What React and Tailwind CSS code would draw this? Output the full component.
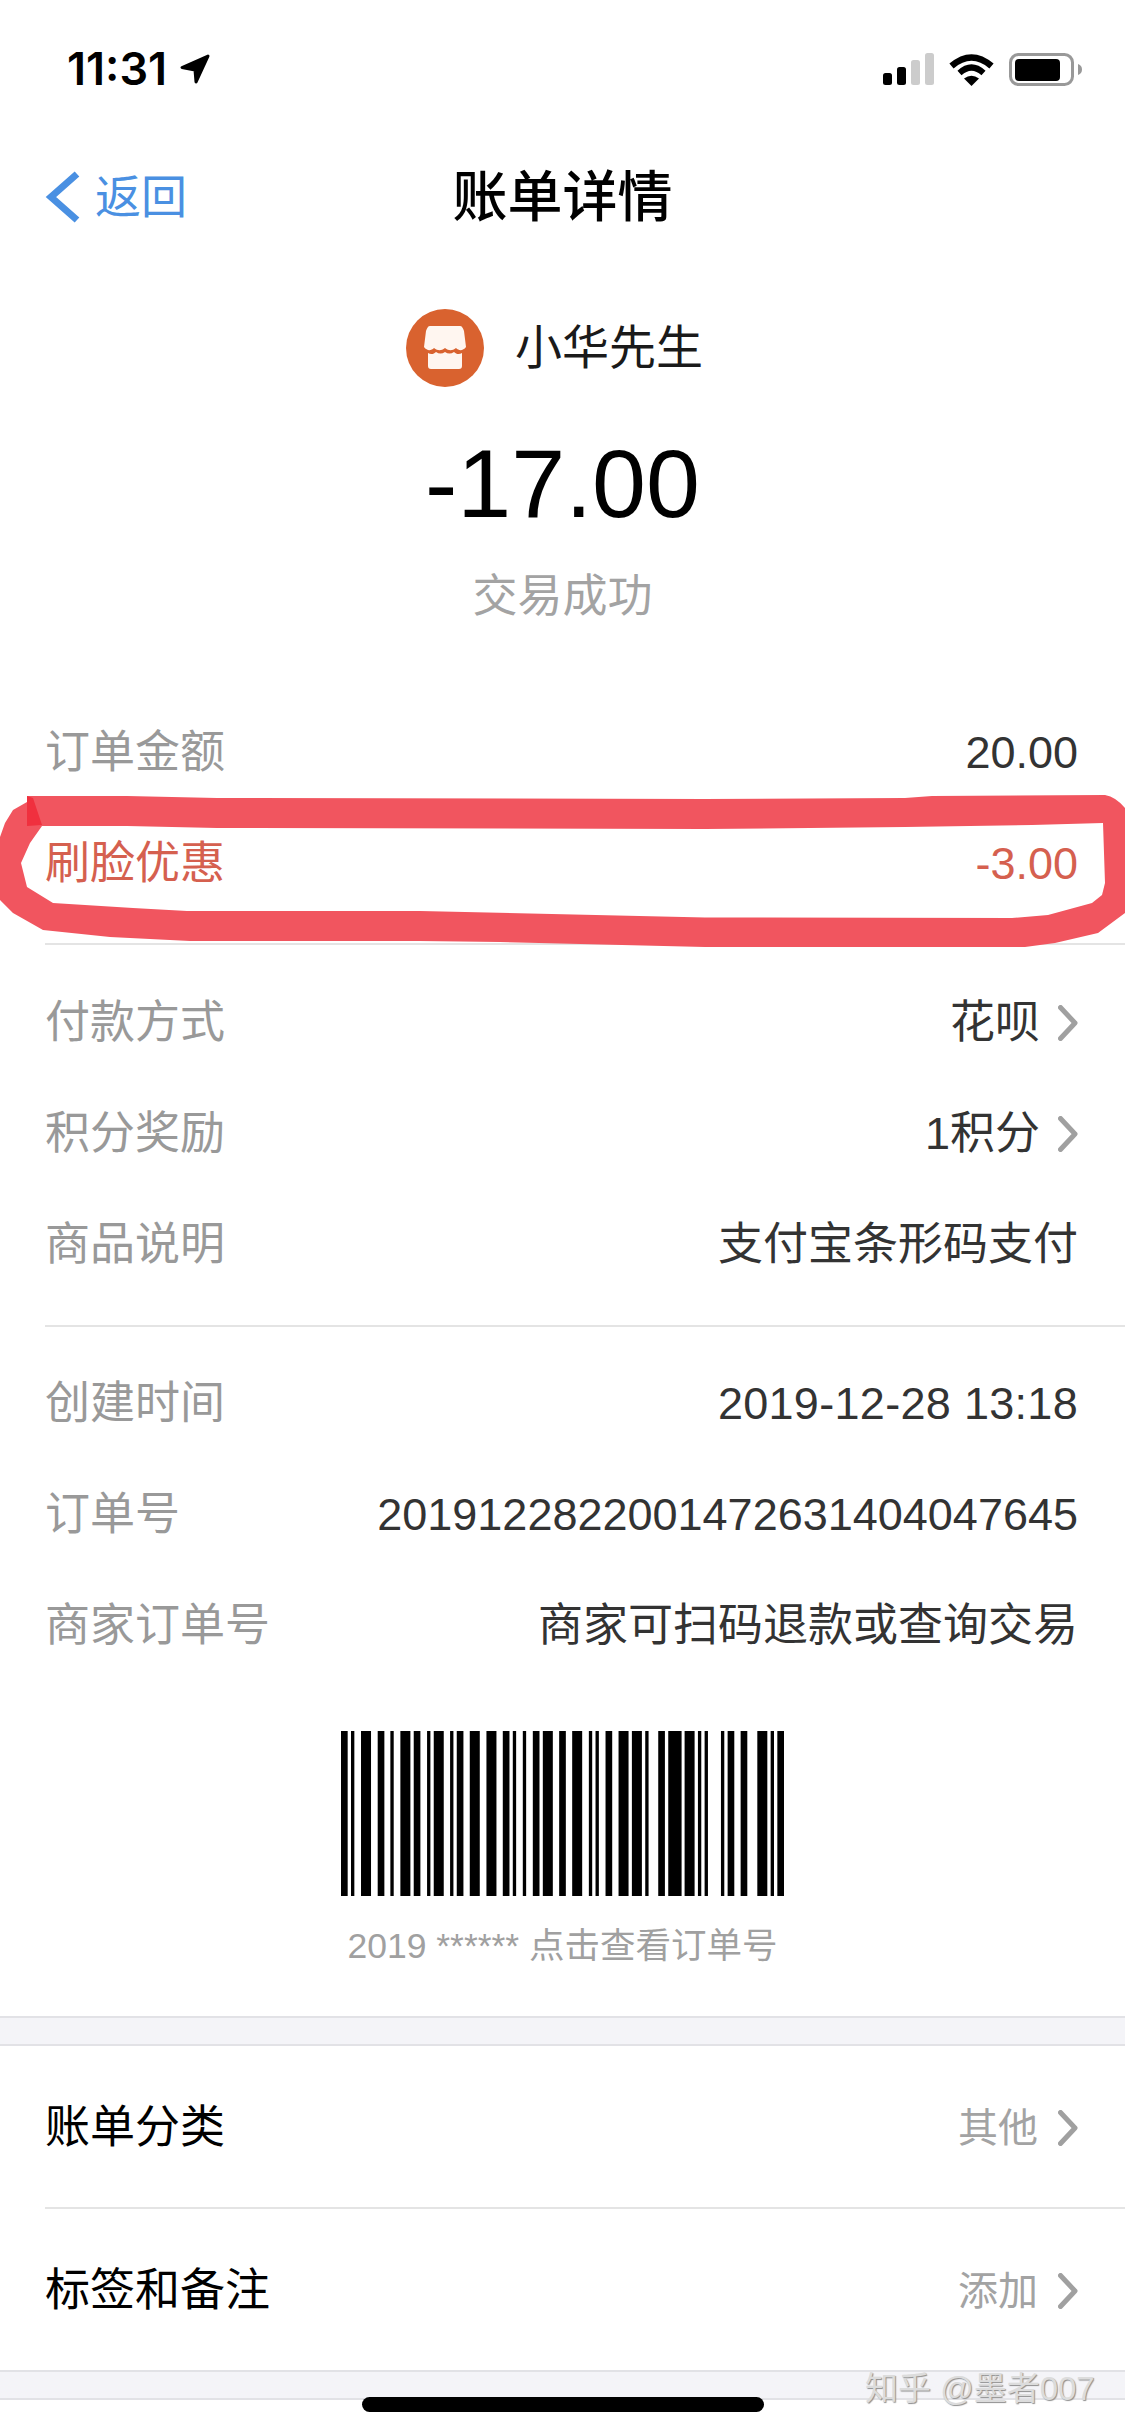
const font = { fontFamily: '"Liberation Sans", "Noto Sans CJK SC", sans-serif' };

// bar edges read off the reference, in 1/3 px
const bars = [
  [65, 85], [95, 105], [125, 155], [175, 195], [213, 223], [243, 273], [283, 303], [323, 333],
  [343, 373], [392, 402], [412, 432], [451, 481], [501, 531], [550, 570], [580, 590], [610, 620],
  [640, 660], [670, 700], [719, 739], [758, 788], [808, 818], [828, 838], [858, 878], [897, 927],
  [937, 967], [977, 987], [1016, 1036], [1046, 1086], [1095, 1125], [1135, 1145], [1155, 1165],
  [1204, 1214], [1224, 1244], [1263, 1283], [1313, 1343], [1353, 1363], [1373, 1393],
];

function Chevron() {
  return (
    <svg width="20" height="36" viewBox="0 0 20 36" fill="none">
      <path d="M2.5 2.5 L17 18 L2.5 33.5" stroke="#a0a0a0" strokeWidth="5" strokeLinecap="round" strokeLinejoin="round" />
    </svg>
  );
}

function Row({ label, value, link, labelClass = 'text-[#999999]', valueClass = 'text-[#333333]' }) {
  return (
    <div className="flex items-center justify-between h-[111px] pt-[3px] pl-[45px] pr-[47px] text-[45px]">
      <span className={labelClass}>{label}</span>
      <span className={`flex items-center gap-[18px] ${valueClass}`}>
        {value}
        {link && <Chevron />}
      </span>
    </div>
  );
}

function LinkRow({ label, value }) {
  return (
    <div className="flex items-center justify-between h-[161px] pt-[3px] pl-[45px] pr-[47px]">
      <span className="text-[45px] text-black">{label}</span>
      <span className="flex items-center gap-[20px] text-[40px] text-[#a3a3a3]">
        {value}
        <Chevron />
      </span>
    </div>
  );
}

function StatusBar() {
  return (
    <div className="flex items-center justify-between h-[138px] pl-[67px] pr-[43px]">
      <div className="flex items-center gap-[13px]">
        <span className="text-[45px] font-semibold text-black" style={{ fontFamily: 'Inter, sans-serif' }}>11:31</span>
        <svg width="30" height="30" viewBox="0 0 30 30">
          <path d="M28 2 L2 13.5 L15 16 L16 28 Z" fill="#000" stroke="#000" strokeWidth="3" strokeLinejoin="round" />
        </svg>
      </div>
      <div className="flex items-center gap-[15px]">
        <svg width="51" height="32" viewBox="0 0 51 32">
          <rect x="0" y="20" width="9" height="12" rx="2.5" fill="#000" />
          <rect x="14" y="14" width="9" height="18" rx="2.5" fill="#000" />
          <rect x="28" y="7" width="9" height="25" rx="2.5" fill="#cccccc" />
          <rect x="42" y="0" width="9" height="32" rx="2.5" fill="#cccccc" />
        </svg>
        <svg width="45" height="33" viewBox="0 0 45 33" fill="none" stroke="#000">
          <path d="M2.5 13 Q22.5 -4 42.5 13" strokeWidth="6.5" />
          <path d="M10.5 20 Q22.5 9 34.5 20" strokeWidth="6" />
          <path d="M22.5 33 L15 25.5 Q22.5 20 30 25.5 Z" fill="#000" stroke="none" />
        </svg>
        <svg width="73" height="33" viewBox="0 0 73 33">
          <rect x="1.5" y="1.5" width="62" height="30" rx="8" fill="none" stroke="#999999" strokeWidth="3" />
          <rect x="6" y="6" width="45" height="22" rx="4" fill="#000" />
          <path d="M69 11 C72 12 73 14 73 16.5 C73 19 72 21 69 22 Z" fill="#999999" />
        </svg>
      </div>
    </div>
  );
}

// hand-drawn marker loop around the discount row
function Annotation() {
  return (
    <svg className="absolute left-0 top-[790px]" width="1125" height="160" viewBox="0 790 1125 160">
      <path
        fill="#f1555f"
        fillRule="evenodd"
        d="M27 796 L127 796 L217 798 L705 799 L905 798 L932 796 L1105 795 Q1116 797 1125 808 L1125 913 L1098 933 L1055 943 L1025 947 L705 947 L500 942 L420 941 L190 941 L110 937 L43 930 L13 913 L0 900 L0 837 L5 823 L13 810 L27 802 Z
           M42 826 L30 843 L21 863 L27 887 L53 903 L133 908 L187 911 L420 911 L705 917.5 L1012 918 L1048 915 L1092 903 L1102 895 L1105 883 L1103 823 L1032 825 L905 827 L705 829 L217 828 L127 826 Z"
      />
      <path d="M27 796 L33 798 L42 825 L27 826 Z" fill="#f0303e" />
    </svg>
  );
}

export default function App() {
  return (
    <div className="relative w-[1125px] h-[2436px] overflow-hidden bg-white" style={font}>
      <StatusBar />

      <div className="grid grid-cols-3 items-center h-[118px]">
        <div className="flex items-center gap-[15px] pl-[45px] text-[46px] text-[#4a90e2]">
          <svg width="35" height="52" viewBox="0 0 35 52" fill="none">
            <path d="M32 3 L6 26 L32 49" stroke="#4a90e2" strokeWidth="7" />
          </svg>
          返回
        </div>
        <div className="text-center text-[55px] font-medium text-black whitespace-nowrap">账单详情</div>
      </div>

      <div className="flex items-center justify-center gap-[31px] h-[184px] pr-[16px]">
        <svg width="78" height="78" viewBox="0 0 78 78">
          <circle cx="39" cy="39" r="39" fill="#d9622f" />
          <path
            d="M24 17 H54 C56 17 57 19 58 22 L60 38 C57 42 53 42 50 39 C46 42 43 42 39 39 C35 42 32 42 28 39 C25 42 21 42 18 38 L20 22 C21 19 22 17 24 17 Z"
            fill="#fff6f0"
          />
          <path d="M22 44 C25 46 28 45 30 43 C33 45 36 45 39 43 C42 45 45 45 48 43 C50 45 53 46 56 44 V57 C56 59 55 60 53 60 H25 C23 60 22 59 22 57 Z" fill="#fff6f0" />
        </svg>
        <span className="text-[47px] text-[#1a1a1a]">小华先生</span>
      </div>

      <div className="flex items-center justify-center h-[88px] text-[97px] text-black">-17.00</div>
      <div className="flex items-center justify-center h-[138px] text-[45px] text-[#a3a3a3]">交易成功</div>

      <div className="pt-[30px] pb-[25px]">
        <Row label="订单金额" value="20.00" />
        <Row label="刷脸优惠" value="-3.00" labelClass="text-[#d5604f]" valueClass="text-[#d5604f]" />
      </div>

      <div className="ml-[45px] h-[2px] bg-[#e4e4e4]" />

      <div className="pt-[21px] pb-[26px]">
        <Row label="付款方式" value="花呗" link />
        <Row label="积分奖励" value="1积分" link />
        <Row label="商品说明" value="支付宝条形码支付" />
      </div>

      <div className="ml-[45px] h-[2px] bg-[#e4e4e4]" />

      <div className="pt-[20px]">
        <Row label="创建时间" value="2019-12-28 13:18" valueClass="text-[#333333] tracking-[0.3px]" />
        <Row label="订单号" value="2019122822001472631404047645" />
        <Row label="商家订单号" value="商家可扫码退款或查询交易" />
      </div>

      <div className="flex flex-col items-center pt-[51px] h-[336px]">
        <svg width="443" height="165" viewBox="65 0 1328 165" preserveAspectRatio="none">
          {bars.map(([a, b]) => (
            <rect key={a} x={a} y="0" width={b - a} height="165" fill="#000" />
          ))}
        </svg>
        <div className="mt-[26px] h-[50px] flex items-center text-[35.5px] text-[#a0a0a0] whitespace-nowrap">2019 ****** 点击查看订单号</div>
      </div>

      <div className="h-[30px] bg-[#f4f4f8] border-y-2 border-[#e2e2e6]" />

      <LinkRow label="账单分类" value="其他" />
      <div className="ml-[45px] h-[2px] bg-[#e4e4e4]" />
      <LinkRow label="标签和备注" value="添加" />

      <div className="h-[30px] bg-[#f4f4f8] border-y-2 border-[#e2e2e6]" />

      <Annotation />

      <div className="absolute left-[362px] top-[2397px] w-[402px] h-[15px] rounded-full bg-black" />
      <div className="absolute left-[865px] top-[2369px] text-[33px] leading-[40px] text-[#dcdcdc] [text-shadow:1px_1px_1px_#8f8f8f] whitespace-nowrap">知乎 @墨者007</div>
    </div>
  );
}
